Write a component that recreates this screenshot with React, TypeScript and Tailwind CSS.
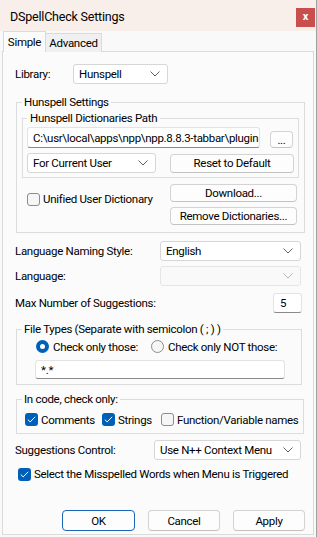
import React from "react";

const Chevron = ({ color = "#606060" }: { color?: string }) => (
  <svg width="10" height="6" viewBox="0 0 10 6" fill="none">
    <path d="M0.5 0.5L5 5L9.5 0.5" stroke={color} strokeWidth="1" />
  </svg>
);

const Select = ({
  value,
  className,
  disabled,
}: {
  value?: string;
  className: string;
  disabled?: boolean;
}) => (
  <div
    className={`flex items-center justify-between rounded-[3px] border pl-[5px] pr-[7px] ${
      disabled ? "bg-[#f9f9f9] border-[#e6e6e6]" : "bg-white border-[#d6d6d6]"
    } ${className}`}
  >
    <span className="whitespace-nowrap">{value}</span>
    <Chevron color={disabled ? "#b8b8b8" : "#606060"} />
  </div>
);

const Button = ({
  label,
  className,
  primary,
}: {
  label: string;
  className: string;
  primary?: boolean;
}) => (
  <div
    className={`flex items-center justify-center rounded-[4px] border bg-[#fdfdfd] whitespace-nowrap ${
      primary ? "border-[#1c64b8]" : "border-[#d3d3d3] border-b-[#c2c2c2]"
    } ${className}`}
  >
    {label}
  </div>
);

const TextBox = ({ value, className }: { value: string; className: string }) => (
  <div
    className={`flex items-center overflow-hidden rounded-[3px] border border-[#e3e3e3] border-b-[#8a8a8a] bg-white pl-[5px] whitespace-nowrap ${className}`}
  >
    {value}
  </div>
);

const CheckBox = ({ checked, label }: { checked?: boolean; label: string }) => (
  <div className="flex items-center">
    {checked ? (
      <div className="flex h-[13px] w-[13px] shrink-0 items-center justify-center rounded-[3px] bg-[#005fb8]">
        <svg width="9" height="7" viewBox="0 0 9 7" fill="none">
          <path d="M0.8 3.6L3.2 5.9L8.2 0.8" stroke="white" strokeWidth="1" />
        </svg>
      </div>
    ) : (
      <div className="h-[13px] w-[13px] shrink-0 rounded-[3px] border border-[#8c8c8c] bg-[#f6f6f6]" />
    )}
    <span className="ml-[3px] whitespace-nowrap">{label}</span>
  </div>
);

const Radio = ({ checked, label }: { checked?: boolean; label: string }) => (
  <div className="flex items-center">
    {checked ? (
      <div className="flex h-[13px] w-[13px] shrink-0 items-center justify-center rounded-full bg-[#005fb8]">
        <div className="h-[5px] w-[5px] rounded-full bg-white" />
      </div>
    ) : (
      <div className="h-[13px] w-[13px] shrink-0 rounded-full border border-[#8c8c8c] bg-[#f6f6f6]" />
    )}
    <span className="ml-[4px] whitespace-nowrap">{label}</span>
  </div>
);

export default function App() {
  return (
    <div className="flex h-[537px] w-[317px] flex-col overflow-hidden border-r border-[#a0a0a0] bg-[#f3f3f3] font-['Roboto',sans-serif] text-[11.5px] leading-[16px] tracking-[-0.3px] text-black">
      {/* Title bar */}
      <div className="flex h-[31px] items-center justify-between bg-[#f9efea] pl-[10px] pr-px pt-[3px]">
        <span className="text-[12.5px] tracking-[-0.2px]">DSpellCheck Settings</span>
        <div className="flex h-[19px] w-[19px] items-center justify-center bg-[#c94f4f] text-[11px] font-bold tracking-normal text-white">
          x
        </div>
      </div>

      <div className="flex flex-1 flex-col bg-[#f9f9f9] pl-[2px] pr-[2px] pb-[2px]">
        {/* Tabs */}
        <div className="relative z-10 -mb-px flex items-end pl-px">
          <div className="flex h-[21px] w-[43px] items-center justify-center border border-b-0 border-[#dadada] bg-[#fbfbfb]">
            Simple
          </div>
          <div className="flex h-[19px] w-[56px] items-center justify-center border-r border-t border-[#dadada] bg-[#f0f0f0]">
            Advanced
          </div>
        </div>

        {/* Tab page */}
        <div className="flex flex-1 flex-col border border-[#dadada] bg-[#fbfbfb]">
          <div className="mt-[12px] flex h-[20px] items-center pl-[12px]">
            <span className="w-[58px]">Library:</span>
            <Select value="Hunspell" className="h-[20px] w-[95px]" />
          </div>

          <fieldset className="ml-[13px] mt-[10px] w-[287px] border border-[#dcdcdc] px-[5px] pb-[7px]">
            <legend className="px-[2px]">Hunspell Settings</legend>
            <fieldset className="border border-[#dcdcdc] px-[4px] pb-[4px]">
              <legend className="px-[3px]">Hunspell Dictionaries Path</legend>
              <div className="mt-px flex items-end">
                <TextBox
                  value="C:\usr\local\apps\npp\npp.8.8.3-tabbar\plugin"
                  className="h-[21px] w-[233px]"
                />
                <Button label="..." className="ml-[10px] h-[17px] w-[23px]" />
              </div>
              <div className="mt-[5px] flex items-center">
                <Select value="For Current User" className="h-[20px] w-[129px]" />
                <Button label="Reset to Default" className="ml-[14px] h-[19px] w-[124px]" />
              </div>
            </fieldset>
            <div className="mt-[6px] flex">
              <div className="mt-[7px] w-[148px] pl-[5px]">
                <CheckBox label="Unified User Dictionary" />
              </div>
              <div className="flex flex-col gap-[5px]">
                <Button label="Download..." className="h-[18px] w-[127px]" />
                <Button label="Remove Dictionaries..." className="h-[18px] w-[127px]" />
              </div>
            </div>
          </fieldset>

          <div className="mt-[8px] flex h-[20px] items-center pl-[12px]">
            <span className="w-[145px]">Language Naming Style:</span>
            <Select value="English" className="h-[20px] w-[141px]" />
          </div>
          <div className="mt-[5px] flex h-[20px] items-center pl-[12px]">
            <span className="w-[145px]">Language:</span>
            <Select disabled className="h-[20px] w-[141px]" />
          </div>
          <div className="mt-[7px] flex h-[20px] items-center pl-[12px]">
            <span className="w-[258px]">Max Number of Suggestions:</span>
            <TextBox value="5" className="h-[20px] w-[29px] pl-[6px]" />
          </div>

          <fieldset className="ml-[13px] mt-[8px] w-[286px] border border-[#dcdcdc] px-[5px] pb-[5px]">
            <legend className="px-[2px]">File Types (Separate with semicolon ( ; ) )</legend>
            <div className="mt-[3px] flex h-[13px] items-center pl-[14px]">
              <div className="w-[115px]">
                <Radio checked label="Check only those:" />
              </div>
              <Radio label="Check only NOT those:" />
            </div>
            <TextBox value="*.*" className="ml-[13px] mt-[7px] h-[19px] w-[250px]" />
          </fieldset>

          <fieldset className="ml-[13px] mt-[6px] w-[286px] border border-[#dcdcdc] px-[5px] pb-[7px]">
            <legend className="px-[2px]">In code, check only:</legend>
            <div className="mt-[6px] flex h-[13px] items-center pl-[3px]">
              <div className="w-[77px]">
                <CheckBox checked label="Comments" />
              </div>
              <div className="w-[59px]">
                <CheckBox checked label="Strings" />
              </div>
              <CheckBox label="Function/Variable names" />
            </div>
          </fieldset>

          <div className="mt-[6px] flex h-[20px] items-center pl-[12px]">
            <span className="w-[139px]">Suggestions Control:</span>
            <Select value="Use N++ Context Menu" className="h-[20px] w-[147px]" />
          </div>
          <div className="mt-[6px] pl-[15px]">
            <CheckBox checked label="Select the Misspelled Words when Menu is Triggered" />
          </div>

          <div className="mb-[3px] mt-auto flex justify-end gap-[13px] pr-[8px]">
            <Button primary label="OK" className="h-[21px] w-[73px]" />
            <Button label="Cancel" className="h-[21px] w-[72px]" />
            <Button label="Apply" className="h-[21px] w-[72px]" />
          </div>
        </div>
      </div>
    </div>
  );
}
